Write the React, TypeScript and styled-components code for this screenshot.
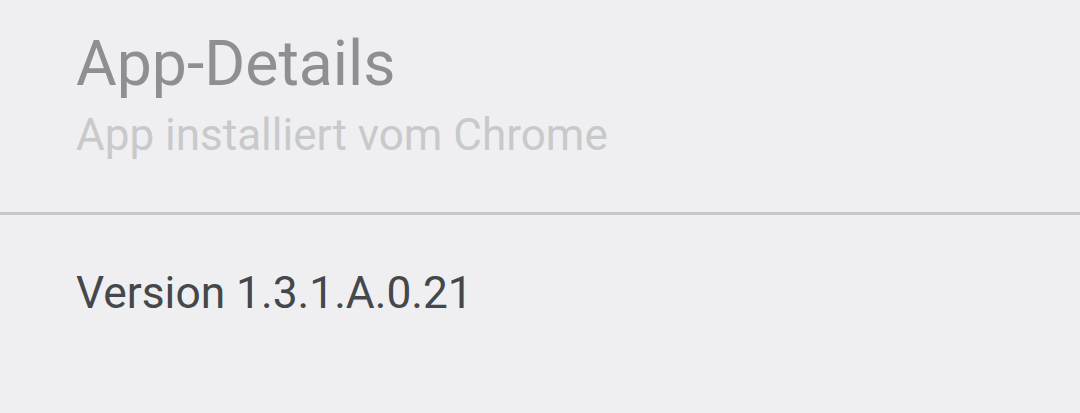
import React from "react";
import styled, { createGlobalStyle } from "styled-components";

const Global = createGlobalStyle`
  html, body {
    margin: 0;
    padding: 0;
    background: #efeff1;
  }
  body {
    font-family: Roboto, "Noto Sans", "Liberation Sans", sans-serif;
    -webkit-font-smoothing: antialiased;
  }
`;

const Page = styled.div`
  width: 1080px;
  height: 413px;
  background: #efeff1;
  display: flex;
  flex-direction: column;
  overflow: hidden;
`;

const Header = styled.header`
  display: flex;
  flex-direction: column;
  padding: 33px 0 55px 76px;
  border-bottom: 3px solid #c6c6c8;
`;

const Title = styled.h1`
  margin: 0;
  font-size: 62.5px;
  line-height: 62px;
  font-weight: 400;
  color: #8e8f92;
`;

const Subtitle = styled.p`
  margin: 18px 0 0;
  font-size: 44px;
  line-height: 44px;
  font-weight: 400;
  color: #c8c9cb;
`;

const Section = styled.section`
  padding: 56px 0 0 76px;
`;

const Version = styled.p`
  margin: 0;
  font-size: 44.3px;
  line-height: 44px;
  font-weight: 400;
  color: #44474b;
`;

export default function App() {
  return (
    <Page>
      <Global />
      <Header>
        <Title>App-Details</Title>
        <Subtitle>App installiert vom Chrome</Subtitle>
      </Header>
      <Section>
        <Version>Version 1.3.1.A.0.21</Version>
      </Section>
    </Page>
  );
}
